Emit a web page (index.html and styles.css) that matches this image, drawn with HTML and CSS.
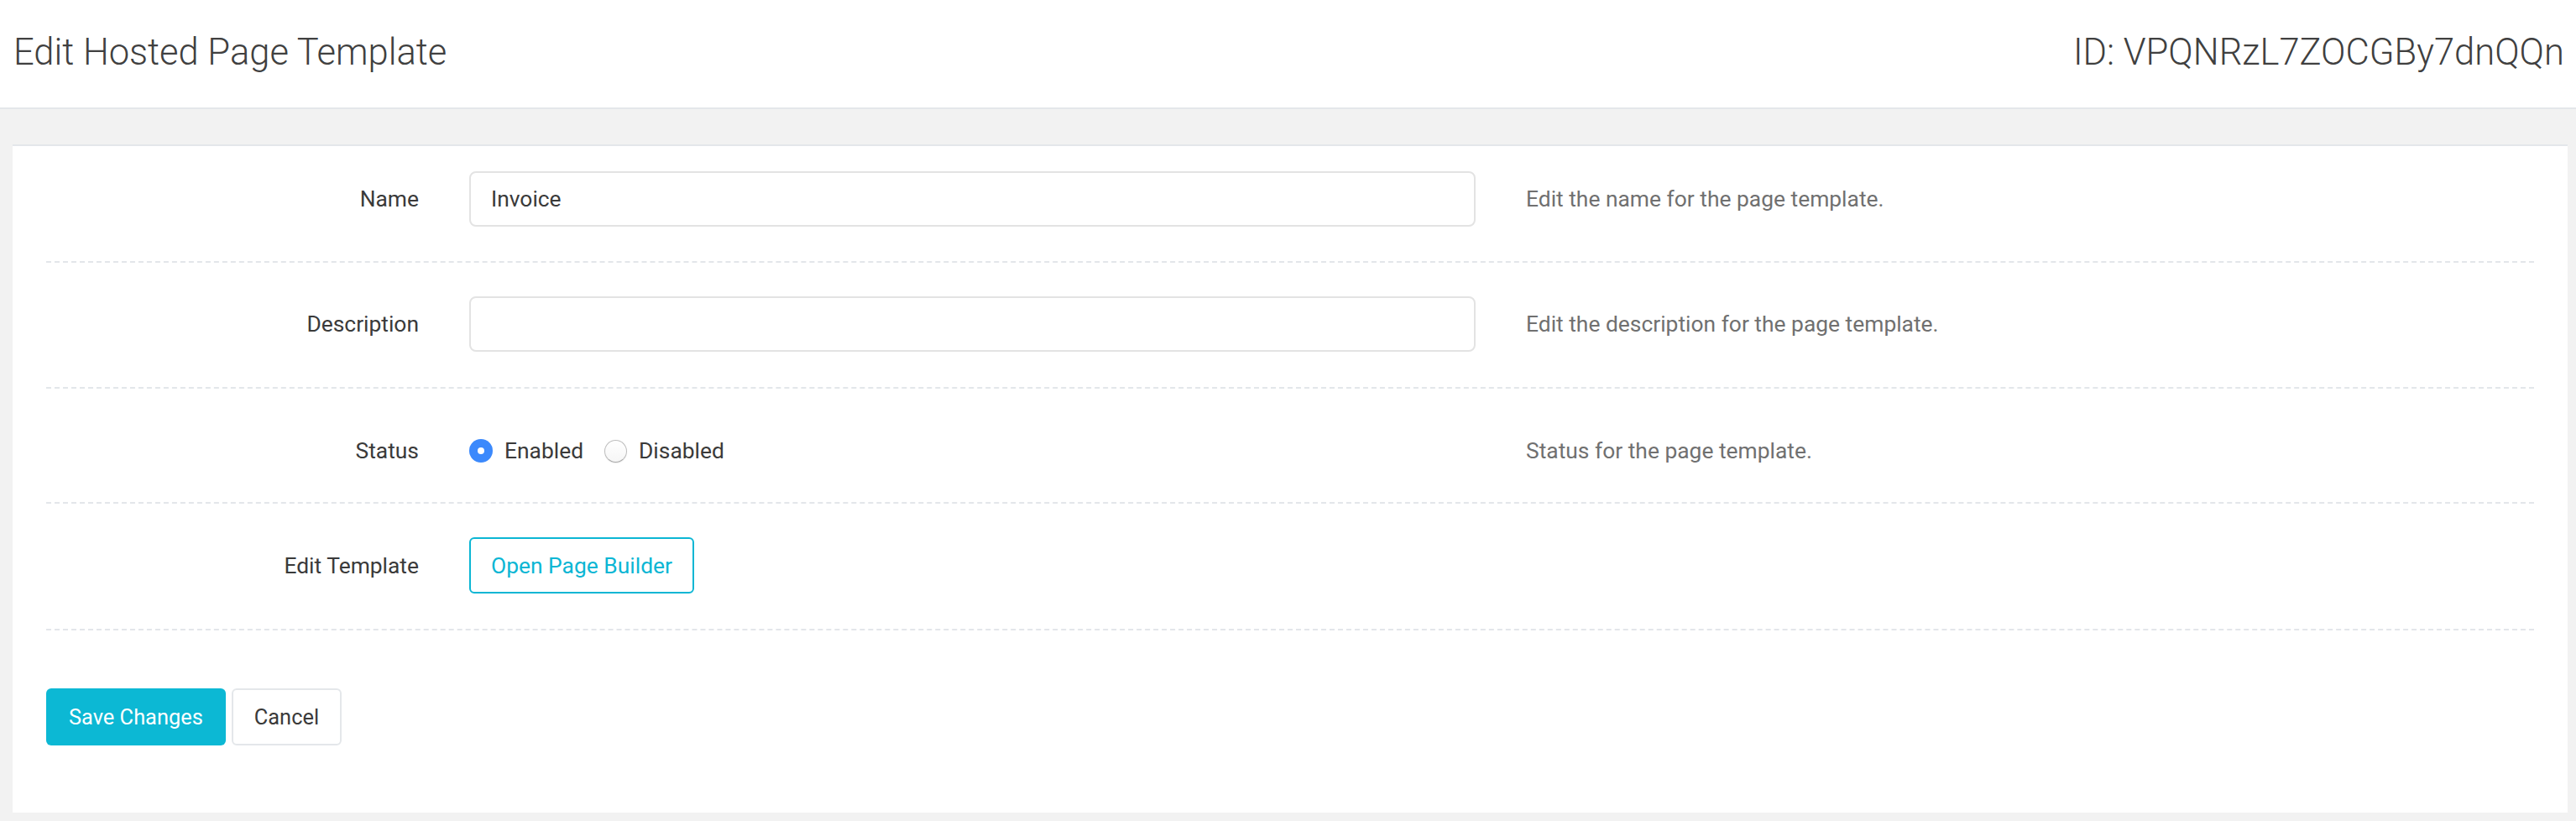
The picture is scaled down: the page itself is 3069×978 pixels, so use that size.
FILE: index.html
```html
<!DOCTYPE html>
<html lang="en">
<head>
    <meta charset="UTF-8">
    <title>Edit Hosted Page Template</title>
    <link rel="stylesheet" href="styles.css">
</head>
<body>
    <header class="page-header">
        <h1 class="page-title">Edit Hosted Page Template</h1>
        <div class="page-id">ID: VPQNRzL7ZOCGBy7dnQQn</div>
    </header>

    <main class="page-body">
        <form class="panel">
            <div class="form-row first">
                <label class="form-label" for="name">Name</label>
                <input class="form-input" type="text" id="name" value="Invoice">
                <p class="form-help">Edit the name for the page template.</p>
            </div>

            <div class="form-row">
                <label class="form-label" for="description">Description</label>
                <input class="form-input" type="text" id="description">
                <p class="form-help">Edit the description for the page template.</p>
            </div>

            <div class="form-row status">
                <span class="form-label">Status</span>
                <div class="radio-group">
                    <label class="radio"><span class="radio-dot checked"></span>Enabled</label>
                    <label class="radio"><span class="radio-dot"></span>Disabled</label>
                </div>
                <p class="form-help">Status for the page template.</p>
            </div>

            <div class="form-row">
                <span class="form-label">Edit Template</span>
                <button type="button" class="btn btn-outline">Open Page Builder</button>
                <p class="form-help"></p>
            </div>

            <div class="form-actions">
                <button type="submit" class="btn btn-primary">Save Changes</button>
                <button type="button" class="btn btn-default">Cancel</button>
            </div>
        </form>
    </main>
</body>
</html>
```

FILE: styles.css
```css
* {
    box-sizing: border-box;
}
body {
    margin: 0;
    font-family: Roboto, "Noto Sans", sans-serif;
    background: #f2f2f2;
    color: #3c3c3c;
}
.page-header {
    background: white;
    height: 130px;
    border-bottom: 2px solid #e4e7ea;
    display: flex;
    align-items: center;
    justify-content: space-between;
    padding: 0 14px 4px 16px;
}
.page-title, .page-id {
    margin: 0;
    font-size: 43.5px;
    font-weight: 300;
    color: #404040;
}
.page-body {
    padding: 42px 10px 11px 15px;
}
.panel {
    background: white;
    border-top: 2px solid #e4e7ea;
    padding: 0 40px;
}
.form-row {
    display: grid;
    grid-template-columns: 444px 1199px 1fr;
    column-gap: 60px;
    align-items: center;
    padding: 40px 0 42px;
    border-bottom: 2px dashed #e3e6ea;
}
.form-row.first {
    padding-top: 30px;
    padding-bottom: 41px;
}
.form-row.status {
    padding-top: 54px;
    padding-bottom: 41px;
}
.form-label {
    text-align: right;
    font-size: 26.4px;
    color: #3a3a3a;
}
.form-input {
    height: 66px;
    width: 100%;
    border: 2px solid #e3e3e3;
    border-radius: 8px;
    padding: 0 24px;
    font-family: inherit;
    font-size: 26.4px;
    color: #3a3a3a;
    outline: none;
}
.form-help {
    margin: 0;
    font-size: 26.4px;
    color: #707070;
}
.radio-group {
    display: flex;
    align-items: center;
    height: 40px;
}
.radio {
    display: flex;
    align-items: center;
    font-size: 26.4px;
    color: #3a3a3a;
    margin-right: 25px;
}
.radio-dot {
    width: 27px;
    height: 27px;
    border-radius: 50%;
    border: 1px solid #bdbdbd;
    border-bottom-color: #a9a9a9;
    background: linear-gradient(#ffffff, #f6f6f6);
    box-shadow: 0 1px 1px rgba(0,0,0,0.08);
    margin-right: 14px;
    position: relative;
}
.radio-dot.checked {
    width: 28px;
    height: 28px;
    border: none;
    background: #3b89fc;
    box-shadow: none;
}
.radio-dot.checked::after {
    content: "";
    position: absolute;
    left: 10px;
    top: 10px;
    width: 8px;
    height: 8px;
    border-radius: 50%;
    background: white;
}
.btn {
    font-family: inherit;
    font-size: 26.4px;
    border-radius: 6px;
    cursor: pointer;
    display: inline-flex;
    align-items: center;
}
.btn-outline {
    justify-self: start;
    height: 67px;
    padding: 0 24px;
    background: white;
    border: 2px solid #0bb6d4;
    color: #0bb6d4;
}
.form-actions {
    display: flex;
    gap: 7px;
    padding: 69px 0 80px;
}
.btn-primary {
    height: 68px;
    padding: 0 27px;
    font-size: 25.4px;
    background: #0cb8d4;
    border: none;
    color: white;
}
.btn-default {
    height: 68px;
    padding: 0 25px;
    font-size: 25.4px;
    background: white;
    border: 2px solid #e4e7ea;
    color: #3a3a3a;
}
```
